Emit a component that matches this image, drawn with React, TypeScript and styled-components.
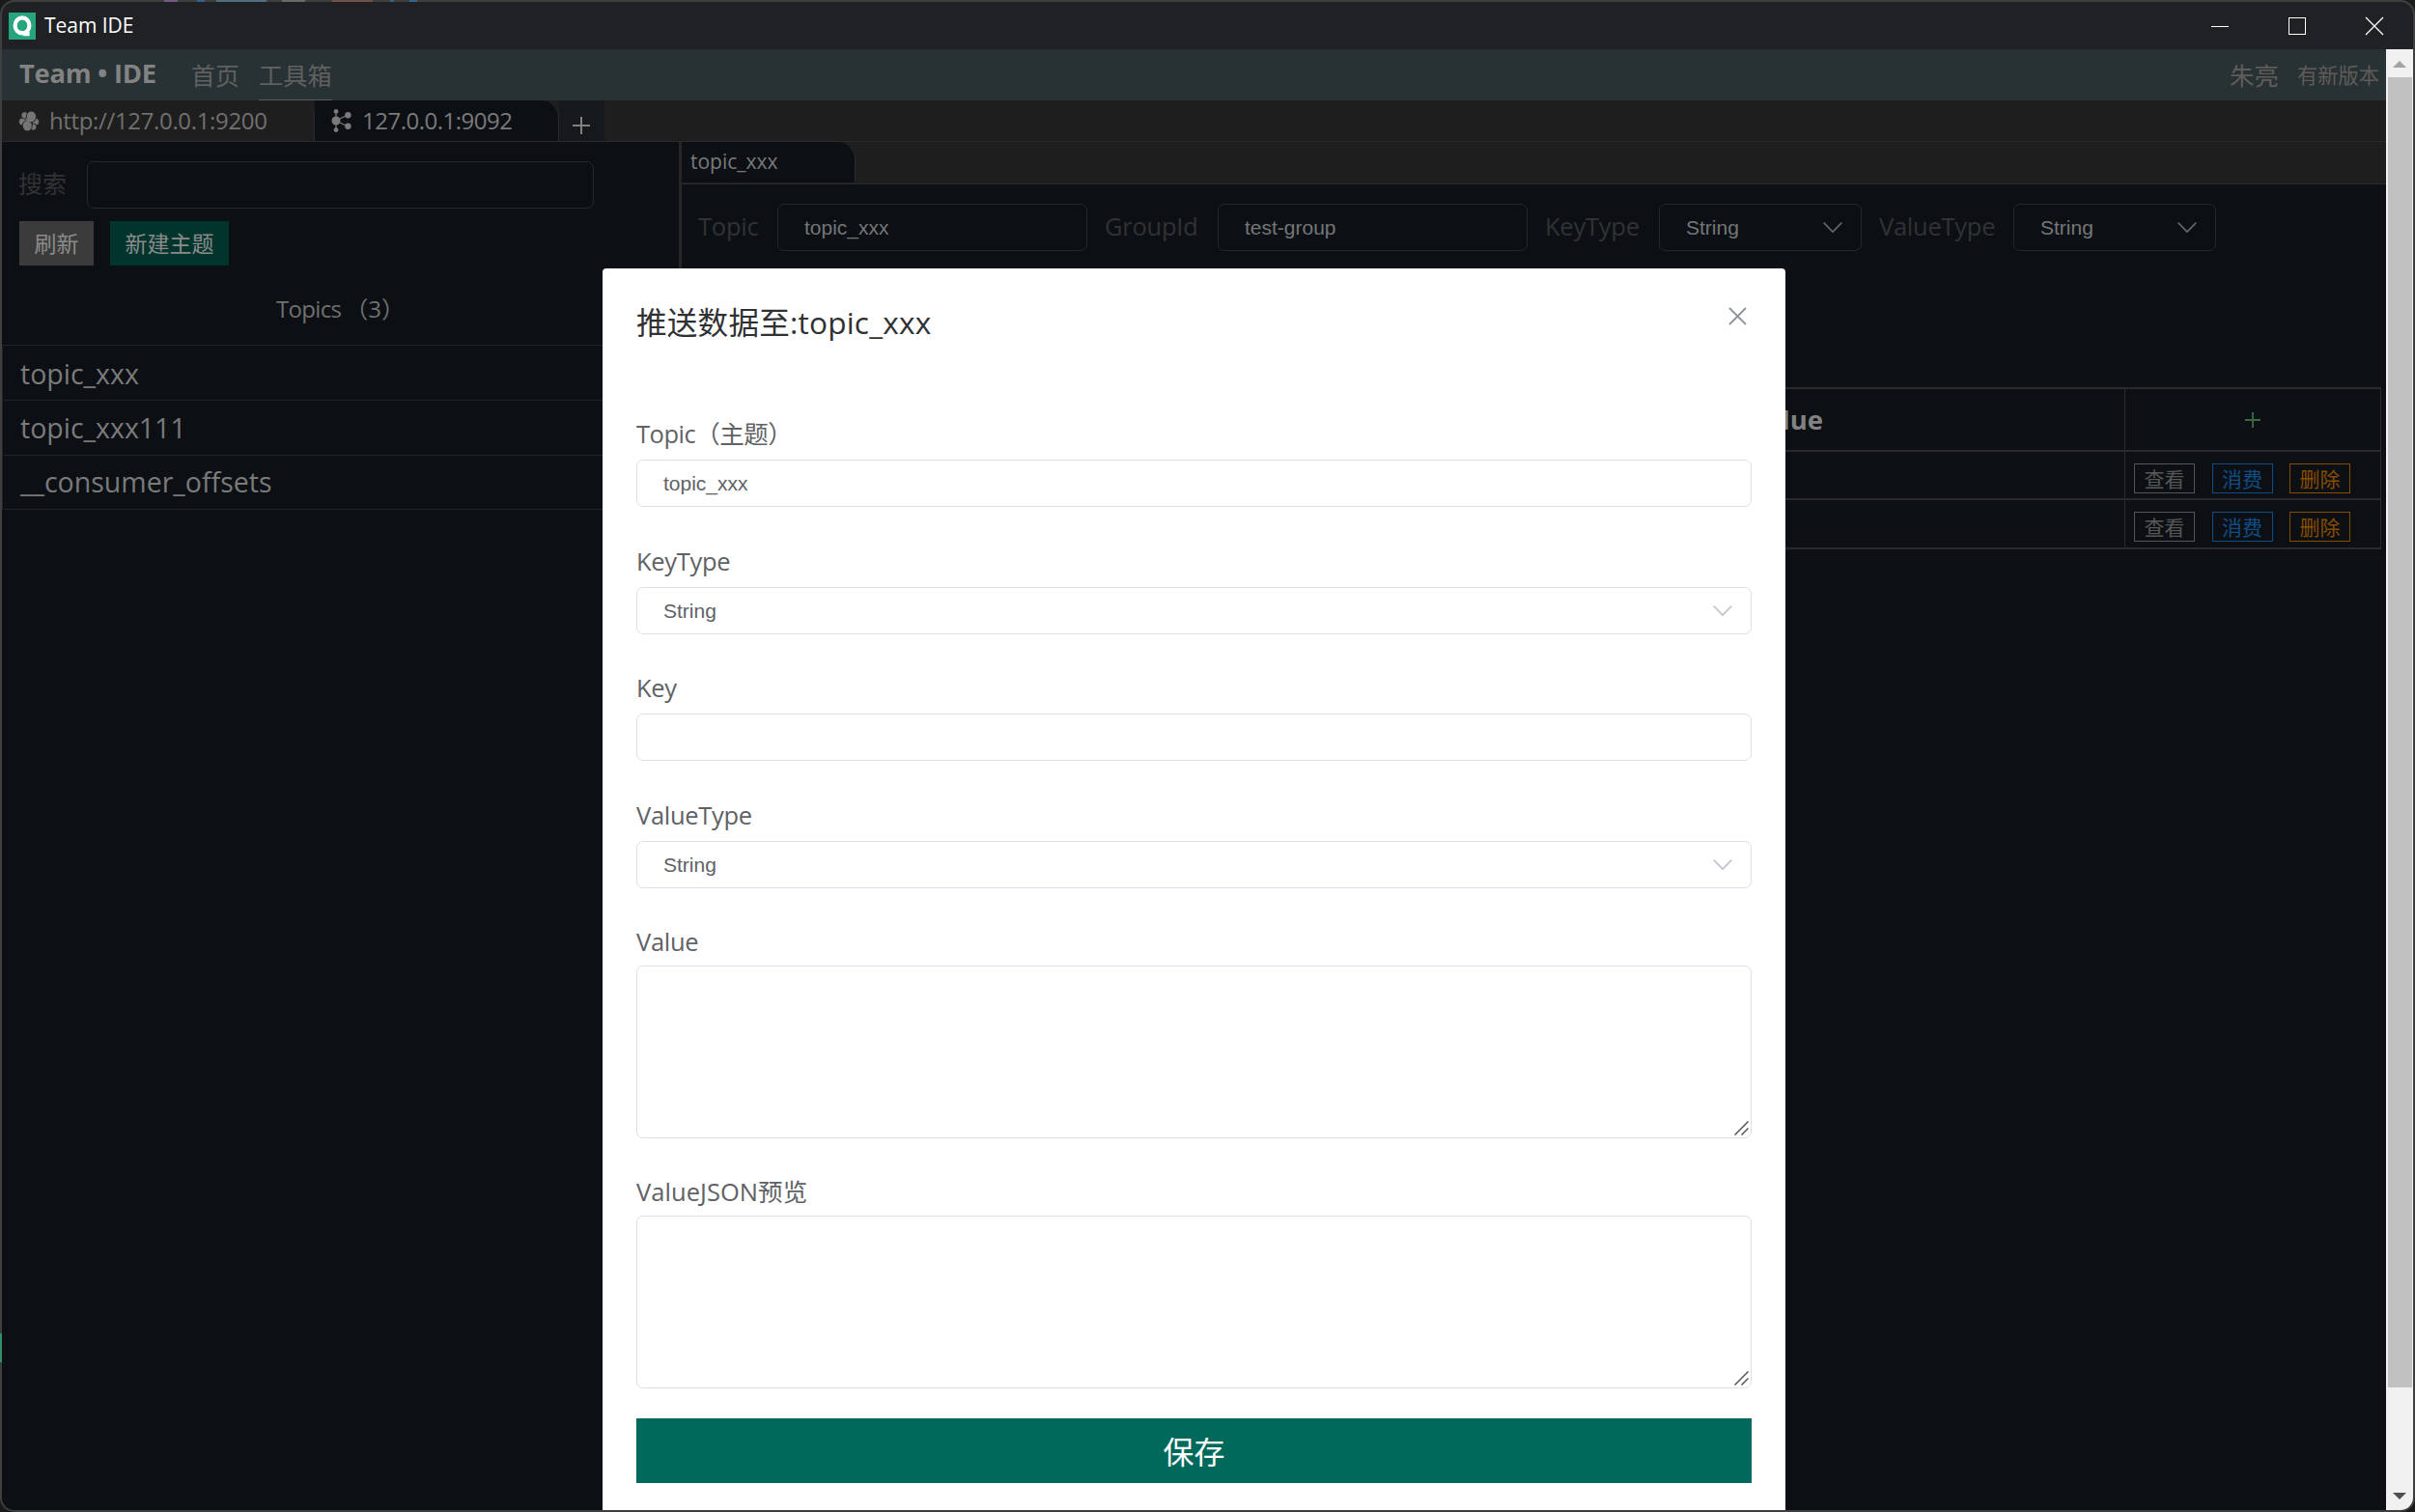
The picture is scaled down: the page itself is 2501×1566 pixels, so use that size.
import React from "react";
import styled, { createGlobalStyle } from "styled-components";

const UI = `"Open Sans", "Noto Sans CJK SC", sans-serif`;
const ARIAL = `"Liberation Sans", Arial, sans-serif`;

const Global = createGlobalStyle`
  *, *::before, *::after { box-sizing: border-box; }
  html, body { margin: 0; padding: 0; background: #1a1a1a; overflow: hidden; }
  body { font-family: ${UI}; }
  button { font-family: inherit; padding: 0; margin: 0; }
`;

const Desktop = styled.div`
  position: relative;
  width: 2501px;
  height: 1566px;
  overflow: hidden;
  background: #1a1a1a;
`;

const AppWindow = styled.div`
  width: 2501px;
  height: 1566px;
  border: 2px solid #3f3f40;
  border-radius: 15px;
  overflow: hidden;
  background: #202124;
  display: flex;
  flex-direction: column;
`;

const CodePeek = styled.div`
  position: absolute;
  top: 0;
  left: 170px;
  width: 280px;
  height: 2px;
  display: flex;
  gap: 8px;
  opacity: 0.75;
`;
const Speck = styled.i<{ $w: number; $c: string; $ml?: number }>`
  width: ${(p) => p.$w}px;
  margin-left: ${(p) => p.$ml ?? 0}px;
  background: ${(p) => p.$c};
`;
const GreenPeek = styled.div`
  position: absolute;
  left: 0;
  top: 1381px;
  width: 2px;
  height: 30px;
  background: #2f8f68;
`;

const Label = styled.span<{ $size: number; $ls?: number; $c?: string; $bold?: boolean; $dy?: number }>`
  display: block;
  white-space: nowrap;
  font-size: ${(p) => p.$size}px;
  letter-spacing: ${(p) => p.$ls ?? 0}px;
  color: ${(p) => p.$c ?? "inherit"};
  font-weight: ${(p) => (p.$bold ? 700 : 400)};
  line-height: 40px;
  transform: translateY(${(p) => p.$dy ?? 0}px);
`;

const TitleBar = styled.header`
  height: 49px;
  flex: none;
  display: flex;
  align-items: center;
  padding: 0 30px 0 7px;
  color: #fff;
`;
const Logo = styled.svg`
  width: 28px;
  height: 28px;
  margin-right: 9px;
`;
const WindowButtons = styled.div`
  margin-left: auto;
  display: flex;
  gap: 60px;
  svg {
    display: block;
    width: 20px;
    height: 20px;
  }
`;

const Page = styled.div`
  flex: 1;
  min-height: 0;
  display: flex;
`;
const Content = styled.div`
  width: 2469px;
  display: flex;
  flex-direction: column;
  background: #0c1014;
`;

const ScrollBar = styled.div`
  width: 28px;
  background: #f1f1f1;
  display: flex;
  flex-direction: column;
  align-items: center;
`;
const ScrollArrow = styled.div<{ $down?: boolean }>`
  width: 0;
  height: 0;
  border: 7px solid transparent;
  border-top: ${(p) => (p.$down ? "7px solid #505050" : "0")};
  border-bottom: ${(p) => (p.$down ? "0" : "7px solid #a3a3a3")};
  margin: ${(p) => (p.$down ? "auto 0 11px" : "12px 0 10px")};
`;
const ScrollThumb = styled.div`
  width: 25px;
  height: 1357px;
  background: #c1c1c1;
`;

const NavBar = styled.nav`
  height: 53px;
  flex: none;
  display: flex;
  align-items: stretch;
  background: #283133;
  padding: 0 7px 0 18px;
  color: #606060;
`;
const Brand = styled.div`
  width: 178px;
  padding-top: 5px;
  color: #838383;
`;
const NavItem = styled.div<{ $active?: boolean; $mr: number }>`
  margin-right: ${(p) => p.$mr}px;
  padding-top: 7px;
  border-bottom: ${(p) => (p.$active ? "1px solid #5a5a5a" : "0")};
`;
const NavRight = styled.div`
  margin-left: auto;
  padding-top: 7px;
  display: flex;
  gap: 19px;
  color: #5f5c5a;
`;

const TabBar = styled.div`
  height: 43px;
  flex: none;
  display: flex;
  background: #1e1e1e;
  border-bottom: 1px solid #2a2a2a;
`;
const Tab = styled.div<{ $w: number; $active?: boolean; $pl: number }>`
  width: ${(p) => p.$w}px;
  height: 42px;
  padding-left: ${(p) => p.$pl}px;
  display: flex;
  align-items: center;
  gap: 10px;
  color: ${(p) => (p.$active ? "#7a7a7a" : "#707070")};
  background: ${(p) => (p.$active ? "#0c1014" : "#1e1e1e")};
  border-right: 1px solid #2a2a2a;
  border-top-right-radius: 18px;
  svg {
    width: 22px;
    height: 26px;
    flex: none;
  }
`;
const AddTab = styled.div`
  width: 47px;
  background: #15191b;
  display: flex;
  justify-content: center;
  padding: 17px 2px 0 0;
  svg {
    width: 18px;
    height: 18px;
  }
`;

const Workspace = styled.div`
  flex: 1;
  min-height: 0;
  display: flex;
`;
const SidePanel = styled.aside`
  width: 701px;
  flex: none;
  display: flex;
  flex-direction: column;
`;
const Splitter = styled.div`
  width: 3px;
  flex: none;
  background: #262626;
`;
const SearchRow = styled.div`
  display: flex;
  align-items: center;
  padding: 20px 0 0 17px;
`;
const SearchLabel = styled.div`
  width: 71px;
  flex: none;
`;
const DarkField = styled.div<{ $w: number; $mr?: number }>`
  width: ${(p) => p.$w}px;
  height: 49px;
  flex: none;
  margin-right: ${(p) => p.$mr ?? 0}px;
  border: 1px solid #25292a;
  border-radius: 7px;
  padding: 0 19px 0 27px;
  display: flex;
  align-items: center;
  justify-content: space-between;
  font-family: ${ARIAL};
  font-size: 21px;
  color: #747678;
`;
const ButtonRow = styled.div`
  display: flex;
  gap: 17px;
  padding: 13px 0 0 18px;
`;
const PanelButton = styled.button<{ $w: number; $bg: string }>`
  width: ${(p) => p.$w}px;
  height: 46px;
  border: 0;
  background: ${(p) => p.$bg};
  color: #8b8b8b;
  display: flex;
  align-items: center;
  justify-content: center;
`;
const TopicsHeader = styled.div`
  height: 82px;
  display: flex;
  justify-content: center;
  align-items: center;
  gap: 4px;
  padding-top: 8px;
  color: #707070;
`;
const TopicList = styled.div`
  border-top: 1px solid #202425;
  border-left: 1px solid #202425;
`;
const TopicRow = styled.div<{ $h: number }>`
  height: ${(p) => p.$h}px;
  margin-left: 1px;
  padding: 9px 0 0 17px;
  border-bottom: 1px solid #202425;
  color: #7a7a7a;
`;

const MainPanel = styled.main`
  flex: 1;
  min-width: 0;
  display: flex;
  flex-direction: column;
`;
const SubTabBar = styled.div`
  height: 44px;
  flex: none;
  background: #1e1e1e;
  border-bottom: 1px solid #2c2c2c;
`;
const SubTab = styled.div`
  width: 180px;
  height: 42px;
  padding-left: 9px;
  background: #0c1014;
  border-right: 1px solid #2a2a2a;
  border-top-right-radius: 18px;
  color: #7a7a7a;
`;
const FilterRow = styled.div`
  display: flex;
  align-items: center;
  padding: 20px 0 0 17px;
`;
const FilterLabel = styled.div<{ $w: number }>`
  width: ${(p) => p.$w}px;
  flex: none;
`;
const Table = styled.div`
  margin: 141px 5px 0 12px;
  border: 2px solid #2a2a2a;
  border-left-width: 1px;
  border-right-width: 1px;
`;
const TableRow = styled.div<{ $h: number; $last?: boolean }>`
  height: ${(p) => p.$h}px;
  display: grid;
  grid-template-columns: 1fr 702px 265px;
  border-bottom: ${(p) => (p.$last ? 0 : 2)}px solid #2a2a2a;
`;
const Cell = styled.div<{ $center?: boolean }>`
  border-left: 1px solid #2a2a2a;
  display: flex;
  align-items: center;
  justify-content: ${(p) => (p.$center ? "center" : "flex-start")};
  color: #828282;
`;
const Actions = styled(Cell)`
  align-items: flex-start;
  padding: 12px 0 0 9px;
  gap: 17.5px;
`;
const ActionButton = styled.button<{ $c: string }>`
  width: 63px;
  height: 31px;
  border: 1px solid ${(p) => p.$c};
  background: transparent;
  color: ${(p) => p.$c};
  display: flex;
  align-items: center;
  justify-content: center;
`;

const Dialog = styled.section`
  position: absolute;
  left: 624px;
  top: 278px;
  width: 1225px;
  height: 1286px;
  padding: 0 35px;
  background: #fff;
  border-radius: 4px 4px 0 0;
  display: flex;
  flex-direction: column;
`;
const DialogHeader = styled.div`
  height: 154px;
  flex: none;
  display: flex;
  justify-content: space-between;
  padding: 36px 5px 0 0;
  color: #303133;
  svg {
    margin-top: 4px;
    width: 19px;
    height: 19px;
  }
`;
const Field = styled.div<{ $mb: number }>`
  flex: none;
  margin-bottom: ${(p) => p.$mb}px;
`;
const FieldLabel = styled.div<{ $h?: number }>`
  height: ${(p) => p.$h ?? 44}px;
  color: #606266;
`;
const FieldBox = styled.div<{ $tall?: boolean }>`
  position: relative;
  height: ${(p) => (p.$tall ? 179 : 49)}px;
  border: 1px solid #dcdfe6;
  border-radius: 7px;
  padding: 0 19px 0 27px;
  display: flex;
  align-items: center;
  justify-content: space-between;
  font-family: ${ARIAL};
  font-size: 21px;
  color: #606266;
`;
const Grip = styled.svg`
  position: absolute;
  right: 2px;
  bottom: 2px;
  width: 15px;
  height: 15px;
`;
const SaveButton = styled.button`
  height: 67px;
  flex: none;
  border: 0;
  background: #00695c;
  color: #fff;
  display: flex;
  align-items: center;
  justify-content: center;
`;

const Chevron = ({ color }: { color: string }) => (
  <svg width="20" height="12" viewBox="0 0 20 12" fill="none" stroke={color} strokeWidth="1.7" strokeLinecap="round" strokeLinejoin="round">
    <path d="M1.2 1.2 10 10.2 18.8 1.2" />
  </svg>
);
const GripMark = () => (
  <Grip viewBox="0 0 15 15" stroke="#555" strokeWidth="1.5">
    <path d="M0.5 14.5 14.5 0.5M7.5 14.5 14.5 7.5" />
  </Grip>
);

const ElasticIcon = () => (
  <svg viewBox="0 0 22 26" fill="#757575" stroke="#1e1e1e" strokeWidth="0.9">
    <circle cx="4.6" cy="14" r="4.1" />
    <circle cx="17.8" cy="14.2" r="3.9" />
    <circle cx="6.6" cy="7.4" r="3.7" />
    <circle cx="15.4" cy="19.6" r="3.5" />
    <ellipse cx="9.3" cy="18.2" rx="5" ry="5.7" />
    <ellipse cx="13.4" cy="8.8" rx="5.1" ry="5.9" />
    <path d="M8 11.2 12.8 14.2" stroke="#757575" strokeWidth="2" />
  </svg>
);
const KafkaIcon = () => (
  <svg viewBox="0 0 22 26" fill="#7a7a7a" stroke="#7a7a7a" strokeWidth="1.3">
    <path fill="none" d="M5 3V23M5 13 17 7M5 13 17 19" />
    <g stroke="none">
      <circle cx="5" cy="3.4" r="2.4" />
      <circle cx="5" cy="22.6" r="2.4" />
      <circle cx="5" cy="13" r="4.5" />
      <circle cx="17.4" cy="7.2" r="3.2" />
      <circle cx="17.4" cy="18.8" r="3.2" />
    </g>
  </svg>
);

const rows = [
  { h: 50, last: false },
  { h: 49, last: true },
];
const topics = [
  { name: "topic_xxx", h: 57, dy: 0 },
  { name: "topic_xxx111", h: 57, dy: -1 },
  { name: "__consumer_offsets", h: 56, dy: -2 },
];
const MUTED = "#303234";

const FilterText = ({ children }: { children: string }) => (
  <Label $size={25.5} $ls={-0.25} $dy={-2} $c={MUTED}>{children}</Label>
);
const FormText = ({ children, ls = -0.3 }: { children: string; ls?: number }) => (
  <Label $size={25.5} $ls={ls} $dy={-3}>{children}</Label>
);

export default function App() {
  return (
    <Desktop>
      <Global />
      <AppWindow>
        <TitleBar>
          <Logo viewBox="0 0 28 28">
            <rect width="28" height="28" fill="#26a47b" />
            <ellipse cx="14" cy="13.4" rx="7.4" ry="8" fill="none" stroke="#fff" strokeWidth="4.2" />
            <path d="M11 18.6 21.6 20.2V24.2H15.6Z" fill="#fff" />
          </Logo>
          <Label $size={21} $ls={-0.05} $dy={-1}>Team IDE</Label>
          <WindowButtons>
            <svg viewBox="0 0 20 20"><path d="M1 10.5H19" stroke="#fff" /></svg>
            <svg viewBox="0 0 20 20"><rect x="1.5" y="1.5" width="17" height="17" fill="none" stroke="#fff" /></svg>
            <svg viewBox="0 0 20 20"><path d="M1 1 19 19M19 1 1 19" stroke="#fff" strokeWidth="1.3" /></svg>
          </WindowButtons>
        </TitleBar>
        <Page>
          <Content>
            <NavBar>
              <Brand><Label $size={27.4} $bold $ls={-0.3}>Team • IDE</Label></Brand>
              <NavItem $mr={20}><Label $size={25}>首页</Label></NavItem>
              <NavItem $mr={0} $active><Label $size={25.2}>工具箱</Label></NavItem>
              <NavRight>
                <Label $size={25.5}>朱亮</Label>
                <Label $size={21.25}>有新版本</Label>
              </NavRight>
            </NavBar>
            <TabBar>
              <Tab $w={324} $pl={17}>
                <ElasticIcon />
                <Label $size={24} $ls={-0.35}>http://127.0.0.1:9200</Label>
              </Tab>
              <Tab $w={253} $pl={17} $active>
                <KafkaIcon />
                <Label $size={24} $ls={-0.5}>127.0.0.1:9092</Label>
              </Tab>
              <AddTab>
                <svg viewBox="0 0 18 18"><path d="M9 0V18M0 9H18" stroke="#808080" strokeWidth="2" /></svg>
              </AddTab>
            </TabBar>
            <Workspace>
              <SidePanel>
                <SearchRow>
                  <SearchLabel><Label $size={25} $c={MUTED} $dy={-2}>搜索</Label></SearchLabel>
                  <DarkField $w={525} />
                </SearchRow>
                <ButtonRow>
                  <PanelButton $w={77} $bg="#3b3b3b"><Label $size={23}>刷新</Label></PanelButton>
                  <PanelButton $w={123} $bg="#00342d"><Label $size={23}>新建主题</Label></PanelButton>
                </ButtonRow>
                <TopicsHeader>
                  <Label $size={24} $ls={-0.7}>Topics</Label>
                  <Label $size={24}>（3）</Label>
                </TopicsHeader>
                <TopicList>
                  {topics.map((t) => (
                    <TopicRow key={t.name} $h={t.h}><Label $size={28.5} $dy={t.dy}>{t.name}</Label></TopicRow>
                  ))}
                </TopicList>
              </SidePanel>
              <Splitter />
              <MainPanel>
                <SubTabBar>
                  <SubTab><Label $size={21}>topic_xxx</Label></SubTab>
                </SubTabBar>
                <FilterRow>
                  <FilterLabel $w={82}><FilterText>Topic</FilterText></FilterLabel>
                  <DarkField $w={321} $mr={18}>topic_xxx</DarkField>
                  <FilterLabel $w={117}><FilterText>GroupId</FilterText></FilterLabel>
                  <DarkField $w={321} $mr={18}>test-group</DarkField>
                  <FilterLabel $w={118}><FilterText>KeyType</FilterText></FilterLabel>
                  <DarkField $w={210} $mr={18}>String<Chevron color="#62666a" /></DarkField>
                  <FilterLabel $w={139}><FilterText>ValueType</FilterText></FilterLabel>
                  <DarkField $w={210}>String<Chevron color="#62666a" /></DarkField>
                </FilterRow>
                <Table>
                  <TableRow $h={65}>
                    <Cell $center><Label $size={27.5} $bold>Key</Label></Cell>
                    <Cell $center><Label $size={27.5} $bold>Value</Label></Cell>
                    <Cell $center>
                      <svg width="16" height="16" viewBox="0 0 16 16"><path d="M8 0V16M0 8H16" stroke="#3a6b40" strokeWidth="1.8" /></svg>
                    </Cell>
                  </TableRow>
                  {rows.map((r, i) => (
                    <TableRow key={i} $h={r.h} $last={r.last}>
                      <Cell />
                      <Cell />
                      <Actions>
                        <ActionButton $c="#565656"><Label $size={21}>查看</Label></ActionButton>
                        <ActionButton $c="#104d85"><Label $size={21}>消费</Label></ActionButton>
                        <ActionButton $c="#884c00"><Label $size={21}>删除</Label></ActionButton>
                      </Actions>
                    </TableRow>
                  ))}
                </Table>
              </MainPanel>
            </Workspace>
          </Content>
          <ScrollBar>
            <ScrollArrow />
            <ScrollThumb />
            <ScrollArrow $down />
          </ScrollBar>
        </Page>
      </AppWindow>
      <CodePeek>
        <Speck $w={14} $c="#8a5f9a" />
        <Speck $w={8} $c="#2f6ea5" $ml={12} />
        <Speck $w={52} $c="#557f96" $ml={4} />
        <Speck $w={24} $c="#777" $ml={8} />
        <Speck $w={42} $c="#80584a" $ml={20} />
        <Speck $w={4} $c="#2f6ea5" $ml={10} />
        <Speck $w={8} $c="#2f6ea5" $ml={8} />
      </CodePeek>
      <GreenPeek />
      <Dialog>
        <DialogHeader>
          <Label $size={31.6} $ls={0.2}>推送数据至:topic_xxx</Label>
          <svg viewBox="0 0 19 19"><path d="M1 1 18 18M18 1 1 18" stroke="#909399" strokeWidth="1.8" /></svg>
        </DialogHeader>
        <Field $mb={39}>
          <FieldLabel><FormText ls={-0.5}>Topic（主题）</FormText></FieldLabel>
          <FieldBox>topic_xxx</FieldBox>
        </Field>
        <Field $mb={38}>
          <FieldLabel><FormText>KeyType</FormText></FieldLabel>
          <FieldBox>String<Chevron color="#c0c4cc" /></FieldBox>
        </Field>
        <Field $mb={39}>
          <FieldLabel><FormText>Key</FormText></FieldLabel>
          <FieldBox />
        </Field>
        <Field $mb={38}>
          <FieldLabel><FormText>ValueType</FormText></FieldLabel>
          <FieldBox>String<Chevron color="#c0c4cc" /></FieldBox>
        </Field>
        <Field $mb={38}>
          <FieldLabel $h={42}><FormText>Value</FormText></FieldLabel>
          <FieldBox $tall><GripMark /></FieldBox>
        </Field>
        <Field $mb={31}>
          <FieldLabel $h={42}><FormText ls={0.05}>ValueJSON预览</FormText></FieldLabel>
          <FieldBox $tall><GripMark /></FieldBox>
        </Field>
        <SaveButton><Label $size={32} $dy={1}>保存</Label></SaveButton>
      </Dialog>
    </Desktop>
  );
}
